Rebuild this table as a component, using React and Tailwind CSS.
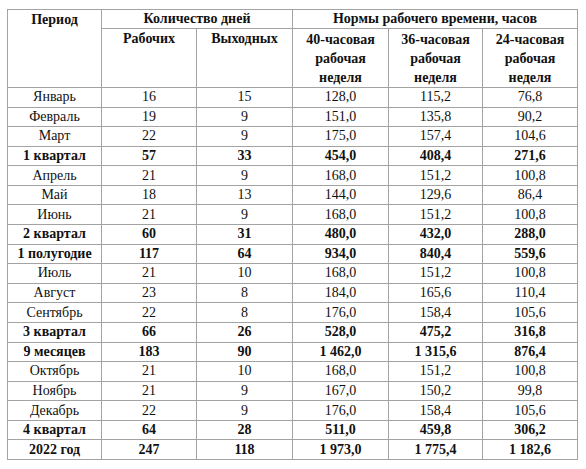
const rows = [
  ["Январь", "16", "15", "128,0", "115,2", "76,8"],
  ["Февраль", "19", "9", "151,0", "135,8", "90,2"],
  ["Март", "22", "9", "175,0", "157,4", "104,6"],
  ["1 квартал", "57", "33", "454,0", "408,4", "271,6", true],
  ["Апрель", "21", "9", "168,0", "151,2", "100,8"],
  ["Май", "18", "13", "144,0", "129,6", "86,4"],
  ["Июнь", "21", "9", "168,0", "151,2", "100,8"],
  ["2 квартал", "60", "31", "480,0", "432,0", "288,0", true],
  ["1 полугодие", "117", "64", "934,0", "840,4", "559,6", true],
  ["Июль", "21", "10", "168,0", "151,2", "100,8"],
  ["Август", "23", "8", "184,0", "165,6", "110,4"],
  ["Сентябрь", "22", "8", "176,0", "158,4", "105,6"],
  ["3 квартал", "66", "26", "528,0", "475,2", "316,8", true],
  ["9 месяцев", "183", "90", "1 462,0", "1 315,6", "876,4", true],
  ["Октябрь", "21", "10", "168,0", "151,2", "100,8"],
  ["Ноябрь", "21", "9", "167,0", "150,2", "99,8"],
  ["Декабрь", "22", "9", "176,0", "158,4", "105,6"],
  ["4 квартал", "64", "28", "511,0", "459,8", "306,2", true],
  ["2022 год", "247", "118", "1 973,0", "1 775,4", "1 182,6", true],
];

const cell =
  "border border-[#a3a3a3] p-0 text-center text-[#111] text-[14px] leading-[18px] font-['Liberation_Serif',serif]";

export default function App() {
  return (
    <div className="w-[586px] h-[469px] bg-white pl-[7px] pt-[9px] font-['Liberation_Serif',serif]">
      <table className="border-collapse table-fixed w-[571px] font-['Liberation_Serif',serif] text-[14px]">
        <colgroup>
          <col className="w-[94px]" />
          <col className="w-[95px]" />
          <col className="w-[96px]" />
          <col className="w-[96px]" />
          <col className="w-[94px]" />
          <col className="w-[95px]" />
        </colgroup>
        <thead>
          <tr className="h-[19px]">
            <th rowSpan={2} className={cell + " align-top font-bold pt-px"}>Период</th>
            <th colSpan={2} className={cell + " font-bold"}>Количество дней</th>
            <th colSpan={3} className={cell + " font-bold"}>Нормы рабочего времени, часов</th>
          </tr>
          <tr className="h-[58px]">
            {["Рабочих", "Выходных"].map((t) => (
              <th key={t} className={cell + " align-top font-bold pt-px"}>{t}</th>
            ))}
            {["40", "36", "24"].map((n) => (
              <th key={n} className={cell + " align-top font-bold pt-px leading-[19px]"}>
                {n}-часовая рабочая неделя
              </th>
            ))}
          </tr>
        </thead>
        <tbody>
          {rows.map((r) => (
            <tr key={r[0]} className="h-[19.58px]">
              {r.slice(0, 6).map((v, i) => (
                <td
                  key={i}
                  className={cell + " whitespace-nowrap " + (r[6] ? "font-bold" : "font-normal")}
                >
                  {v}
                </td>
              ))}
            </tr>
          ))}
        </tbody>
      </table>
    </div>
  );
}
